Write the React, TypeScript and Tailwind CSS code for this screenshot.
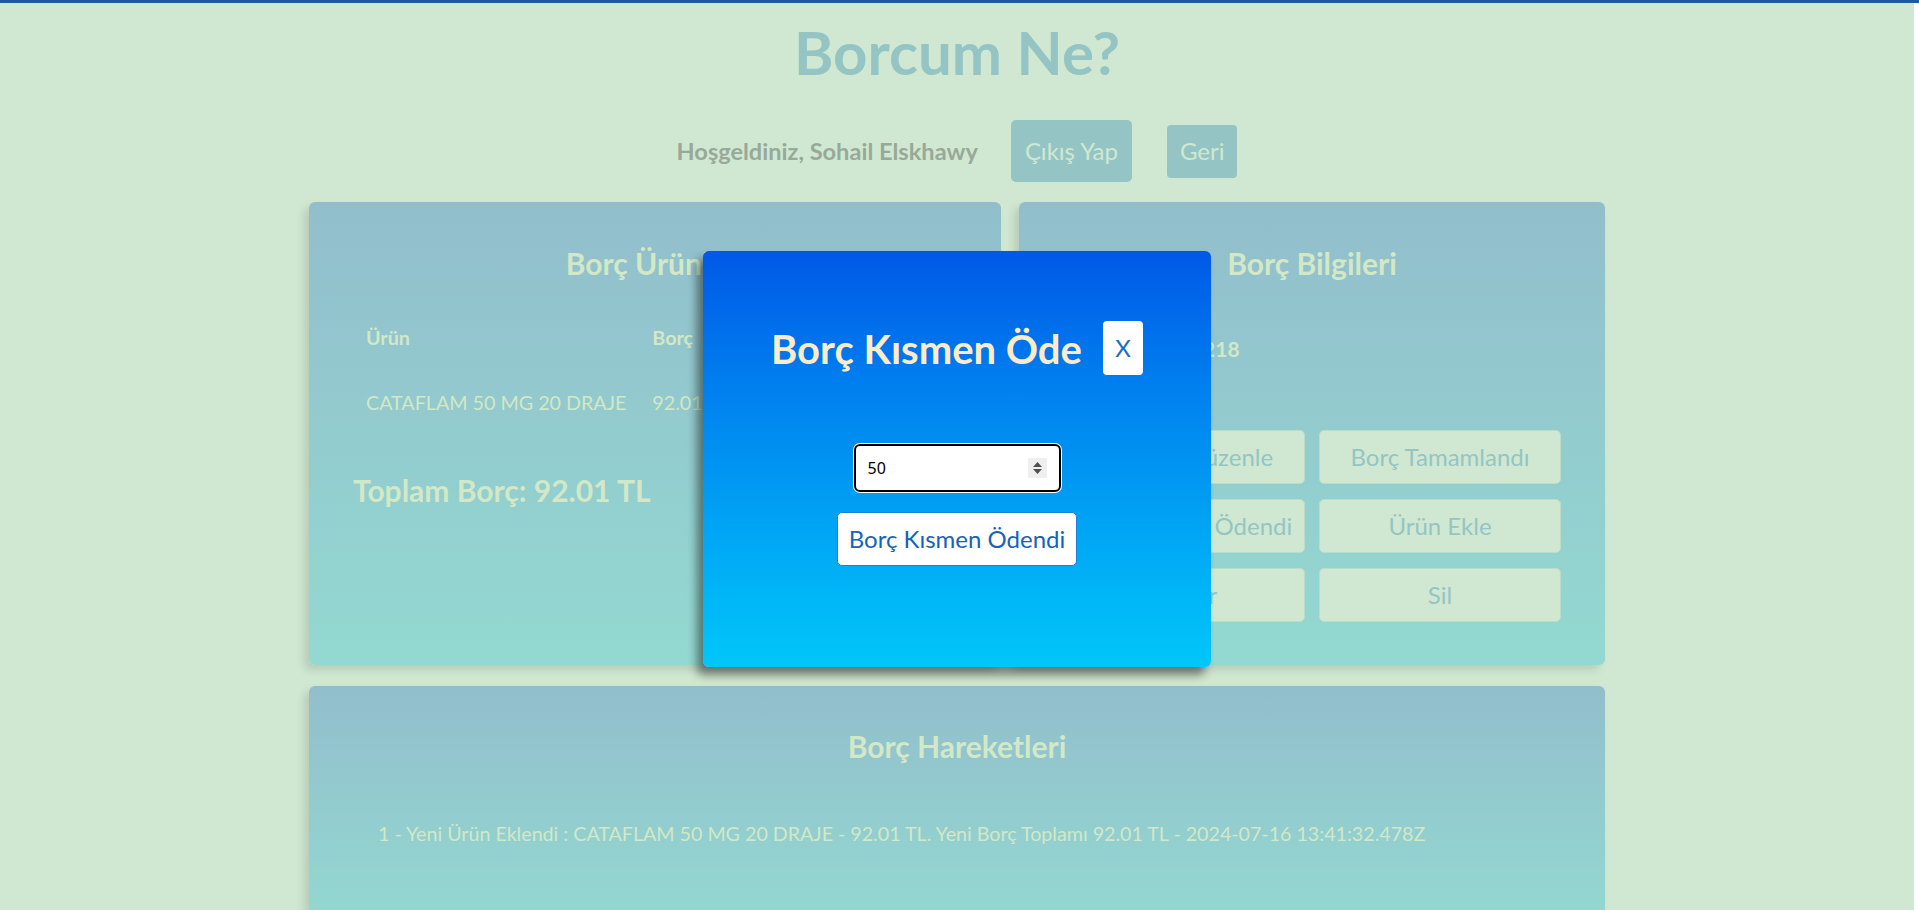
import React from 'react';

const cardBg = 'bg-gradient-to-b from-[#92becc] to-[#93d9d1]';

function ActionButton({ label }: { label: string }) {
  return (
    <button className="h-[54px] rounded-[5px] border border-[#bcdcc9] bg-[#d0e8d2] text-[24px] leading-[1.2] text-[#94c5c4]">
      {label}
    </button>
  );
}

function PartialPayModal() {
  return (
    <div className="absolute inset-0 flex justify-center pt-[248px]">
      <div className="flex h-[416px] w-[508px] flex-col items-center rounded-[6px] bg-gradient-to-b from-[#0058e7] to-[#00c7f9] pt-[70px] shadow-[-6px_8px_10px_rgba(0,0,0,0.45)]">
        <div className="flex h-[54px] items-center gap-[21px]">
          <h2 className="pt-[1px] text-[40px] font-bold leading-[1.2] text-[#fdecca]">Borç Kısmen Öde</h2>
          <button className="h-[54px] w-[40px] rounded-[4px] bg-white text-[24px] text-[#1a6fc6]">X</button>
        </div>
        <div className="relative mt-[69px] h-[48px] w-[207px]">
          <input
            type="text"
            defaultValue="50"
            className="h-full w-full rounded-[6px] border-2 border-black bg-white pl-[12px] font-['Noto_Sans',sans-serif] text-[16px] text-black shadow-[0_0_0_1px_#ffffff] outline-none"
          />
          {/* number spinner */}
          <div className="absolute right-[14px] top-[14px] flex h-[20px] w-[19px] flex-col items-center justify-center gap-[2px] bg-[#efefef]">
            <svg width="9" height="5" viewBox="0 0 9 5">
              <path d="M0 5 L4.5 0 L9 5 Z" fill="#505050" />
            </svg>
            <svg width="9" height="5" viewBox="0 0 9 5">
              <path d="M0 0 L4.5 5 L9 0 Z" fill="#505050" />
            </svg>
          </div>
        </div>
        <button className="mt-[20px] h-[54px] w-[240px] rounded-[5px] border border-[#1d7fd6] bg-white text-[24px] leading-[1.2] text-[#1663bd]">
          Borç Kısmen Ödendi
        </button>
      </div>
    </div>
  );
}

export default function App() {
  return (
    <div className="h-[910px] overflow-hidden border-t-[3px] border-[#1f59a4] bg-white font-['Lato',sans-serif]">
      <div className="relative h-[907px] w-[1914px] bg-[#d0e8d2]">
        <h1 className="pt-[13px] text-center text-[60px] font-bold leading-[1.2] text-[#94c5c4]">Borcum Ne?</h1>

        <div className="mt-[32px] flex h-[62px] items-center justify-center">
          <span className="text-[23.6px] font-bold leading-[1.2] text-[#98a999]">Hoşgeldiniz, Sohail Elskhawy</span>
          <button className="ml-[33px] h-[62px] rounded-[5px] bg-[#94c5c4] px-[14px] text-[24px] leading-[1.2] text-[#d0e8d2]">
            Çıkış Yap
          </button>
          <button className="ml-[35px] h-[53px] rounded-[4px] bg-[#94c5c4] px-[13px] text-[24px] leading-[1.2] text-[#d0e8d2]">
            Geri
          </button>
        </div>

        <div className="mx-auto mt-[20px] w-[1296px]">
          <div className="flex gap-[18px]">
            {/* products */}
            <div className={`h-[463px] w-[692px] rounded-[6px] px-[44px] pt-[43px] ${cardBg} shadow-[-5px_5px_8px_rgba(0,0,0,0.12)]`}>
              <h2 className="text-center text-[30px] font-bold leading-[1.2] text-[#d2e8c6]">Borç Ürünleri</h2>
              <table className="mt-[24px] text-left text-[19.7px] leading-[1.2] text-[#d2e8c6]">
                <thead>
                  <tr>
                    <th className="w-[285px] px-[13px] pb-[20px] pt-[21px] font-bold">Ürün</th>
                    <th className="px-[13px] pb-[20px] pt-[21px] font-bold">Borç</th>
                    <th className="px-[13px] pb-[20px] pt-[21px] font-bold">İşlem</th>
                  </tr>
                </thead>
                <tbody>
                  <tr>
                    <td className="whitespace-nowrap px-[13px] pb-[20px] pt-[21px]">CATAFLAM 50 MG 20 DRAJE</td>
                    <td className="px-[13px] pb-[20px] pt-[21px]">92.01</td>
                    <td className="px-[13px] pb-[20px] pt-[21px]">Sil</td>
                  </tr>
                </tbody>
              </table>
              <p className="mt-[38px] text-[30px] font-bold leading-[1.2] text-[#d2e8c6]">Toplam Borç: 92.01 TL</p>
            </div>

            {/* info */}
            <div className={`h-[463px] w-[586px] rounded-[6px] px-[44px] pt-[43px] ${cardBg} shadow-[-5px_5px_8px_rgba(0,0,0,0.12)]`}>
              <h2 className="text-center text-[30px] font-bold leading-[1.2] text-[#d2e8c6]">Borç Bilgileri</h2>
              <p className="mt-[55px] text-[21px] font-bold leading-[1.2] text-[#d2e8c6]">Telefon: 05327218</p>
              <div className="mt-[69px] grid grid-cols-2 gap-x-[14px] gap-y-[15px]">
                <ActionButton label="Ürünleri Düzenle" />
                <ActionButton label="Borç Tamamlandı" />
                <ActionButton label="Borç Kısmen Ödendi" />
                <ActionButton label="Ürün Ekle" />
                <ActionButton label="Notlar" />
                <ActionButton label="Sil" />
              </div>
            </div>
          </div>

          {/* history */}
          <div className={`mt-[21px] h-[240px] rounded-[6px] pt-[42px] ${cardBg} shadow-[-5px_5px_8px_rgba(0,0,0,0.12)]`}>
            <h2 className="text-center text-[30px] font-bold leading-[1.2] text-[#d2e8c6]">Borç Hareketleri</h2>
            <p className="mt-[58px] pl-[69px] text-[19.65px] leading-[1.2] text-[#d2e8c6]">
              1 - Yeni Ürün Eklendi : CATAFLAM 50 MG 20 DRAJE - 92.01 TL. Yeni Borç Toplamı 92.01 TL - 2024-07-16 13:41:32.478Z
            </p>
          </div>
        </div>

        <PartialPayModal />
      </div>
    </div>
  );
}
